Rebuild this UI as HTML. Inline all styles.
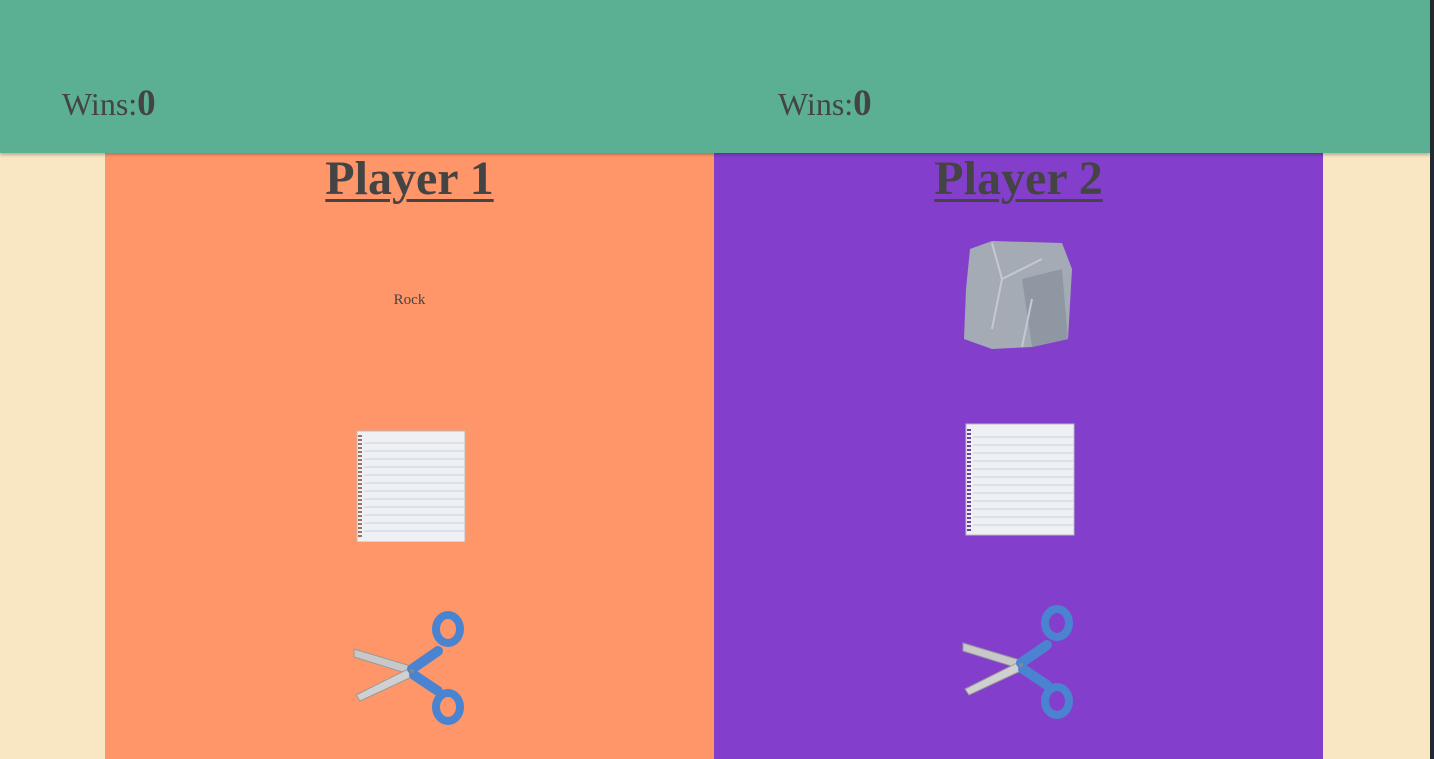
<!DOCTYPE html>
<html><head><style>
body{margin:0;width:1434px;height:759px;overflow:hidden;background:#f9e6c3;font-family:"Liberation Serif",serif;color:#444;position:relative}
.hdr{position:absolute;left:0;top:0;width:1430px;height:153px;background:#5bb094;box-shadow:0 2px 3px rgba(0,0,0,.25);z-index:2}
.w{position:absolute;top:84px;font-size:32px;line-height:40px}
.w b{font-size:37px}
.strip{position:absolute;right:0;top:0;width:4px;height:759px;background:#222a30;z-index:3}
.p{position:absolute;top:153px;width:609px;height:606px}
.p h1{margin:0;position:absolute;top:0;width:100%;text-align:center;font-size:48px;line-height:52px;text-decoration:underline;text-decoration-thickness:3px;text-underline-offset:5px;font-weight:bold}
svg{position:absolute}
</style></head><body>
<div class="hdr"><div class="w" style="left:62px">Wins:<b>0</b></div><div class="w" style="left:778px">Wins:<b>0</b></div></div>
<div class="strip"></div>
<div class="p" style="left:105px;background:#fe966a"><h1>Player 1</h1>
<div style="position:absolute;left:0;width:100%;top:139px;text-align:center;font-size:15px">Rock</div>
<svg style="left:249px;top:276px" width="113" height="113" viewBox="0 0 113 113"><rect x="3" y="2" width="108" height="111" fill="#eef0f4" stroke="#bbb"/><g stroke="#c8d2e6" stroke-width="1"><line x1="10" y1="14" x2="110" y2="14"/><line x1="10" y1="22" x2="110" y2="22"/><line x1="10" y1="30" x2="110" y2="30"/><line x1="10" y1="38" x2="110" y2="38"/><line x1="10" y1="46" x2="110" y2="46"/><line x1="10" y1="54" x2="110" y2="54"/><line x1="10" y1="62" x2="110" y2="62"/><line x1="10" y1="70" x2="110" y2="70"/><line x1="10" y1="78" x2="110" y2="78"/><line x1="10" y1="86" x2="110" y2="86"/><line x1="10" y1="94" x2="110" y2="94"/><line x1="10" y1="102" x2="110" y2="102"/></g><line x1="6" y1="6" x2="6" y2="108" stroke="#a07060" stroke-width="4" stroke-dasharray="2 2"/></svg>
<svg style="left:247px;top:458px" width="115" height="115" viewBox="0 0 115 115"><path d="M2 38 L62 56 L60 64 L2 46Z" fill="#c8c8c8" stroke="#999"/><path d="M4 84 L60 56 L64 64 L8 90Z" fill="#d0d0d0" stroke="#999"/><path d="M60 58 L86 40" stroke="#4a84d0" stroke-width="10" stroke-linecap="round"/><ellipse cx="96" cy="18" rx="12" ry="14" fill="none" stroke="#4a84d0" stroke-width="8"/><path d="M62 64 L86 80" stroke="#4a84d0" stroke-width="10" stroke-linecap="round"/><ellipse cx="96" cy="96" rx="12" ry="14" fill="none" stroke="#4a84d0" stroke-width="8"/><circle cx="60" cy="60" r="2" fill="#888"/></svg>
</div>
<div class="p" style="left:714px;background:#833fcc"><h1>Player 2</h1>
<svg style="left:248px;top:86px" width="113" height="113" viewBox="0 0 113 113"><path d="M8 10 L30 2 L100 4 L110 30 L106 100 L70 108 L30 110 L2 100 L4 50Z" fill="#a4abb5"/><path d="M60 40 L100 30 L106 100 L70 108Z" fill="#8f98a2"/><path d="M30 4 L40 40 L80 20 M40 40 L30 90 M70 60 L60 108" stroke="#c4c8d0" stroke-width="2" fill="none"/></svg>
<svg style="left:249px;top:270px" width="113" height="113" viewBox="0 0 113 113"><rect x="3" y="1" width="108" height="111" fill="#eef0f4" stroke="#bbb"/><g stroke="#c8d2e6" stroke-width="1"><line x1="10" y1="14" x2="110" y2="14"/><line x1="10" y1="22" x2="110" y2="22"/><line x1="10" y1="30" x2="110" y2="30"/><line x1="10" y1="38" x2="110" y2="38"/><line x1="10" y1="46" x2="110" y2="46"/><line x1="10" y1="54" x2="110" y2="54"/><line x1="10" y1="62" x2="110" y2="62"/><line x1="10" y1="70" x2="110" y2="70"/><line x1="10" y1="78" x2="110" y2="78"/><line x1="10" y1="86" x2="110" y2="86"/><line x1="10" y1="94" x2="110" y2="94"/><line x1="10" y1="102" x2="110" y2="102"/></g><line x1="6" y1="6" x2="6" y2="108" stroke="#6a40a0" stroke-width="4" stroke-dasharray="2 2"/></svg>
<svg style="left:247px;top:452px" width="115" height="115" viewBox="0 0 115 115"><path d="M2 38 L62 56 L60 64 L2 46Z" fill="#c8c8c8" stroke="#999"/><path d="M4 84 L60 56 L64 64 L8 90Z" fill="#d0d0d0" stroke="#999"/><path d="M60 58 L86 40" stroke="#4a84d0" stroke-width="10" stroke-linecap="round"/><ellipse cx="96" cy="18" rx="12" ry="14" fill="none" stroke="#4a84d0" stroke-width="8"/><path d="M62 64 L86 80" stroke="#4a84d0" stroke-width="10" stroke-linecap="round"/><ellipse cx="96" cy="96" rx="12" ry="14" fill="none" stroke="#4a84d0" stroke-width="8"/><circle cx="60" cy="60" r="2" fill="#888"/></svg>
</div>
</body></html>
